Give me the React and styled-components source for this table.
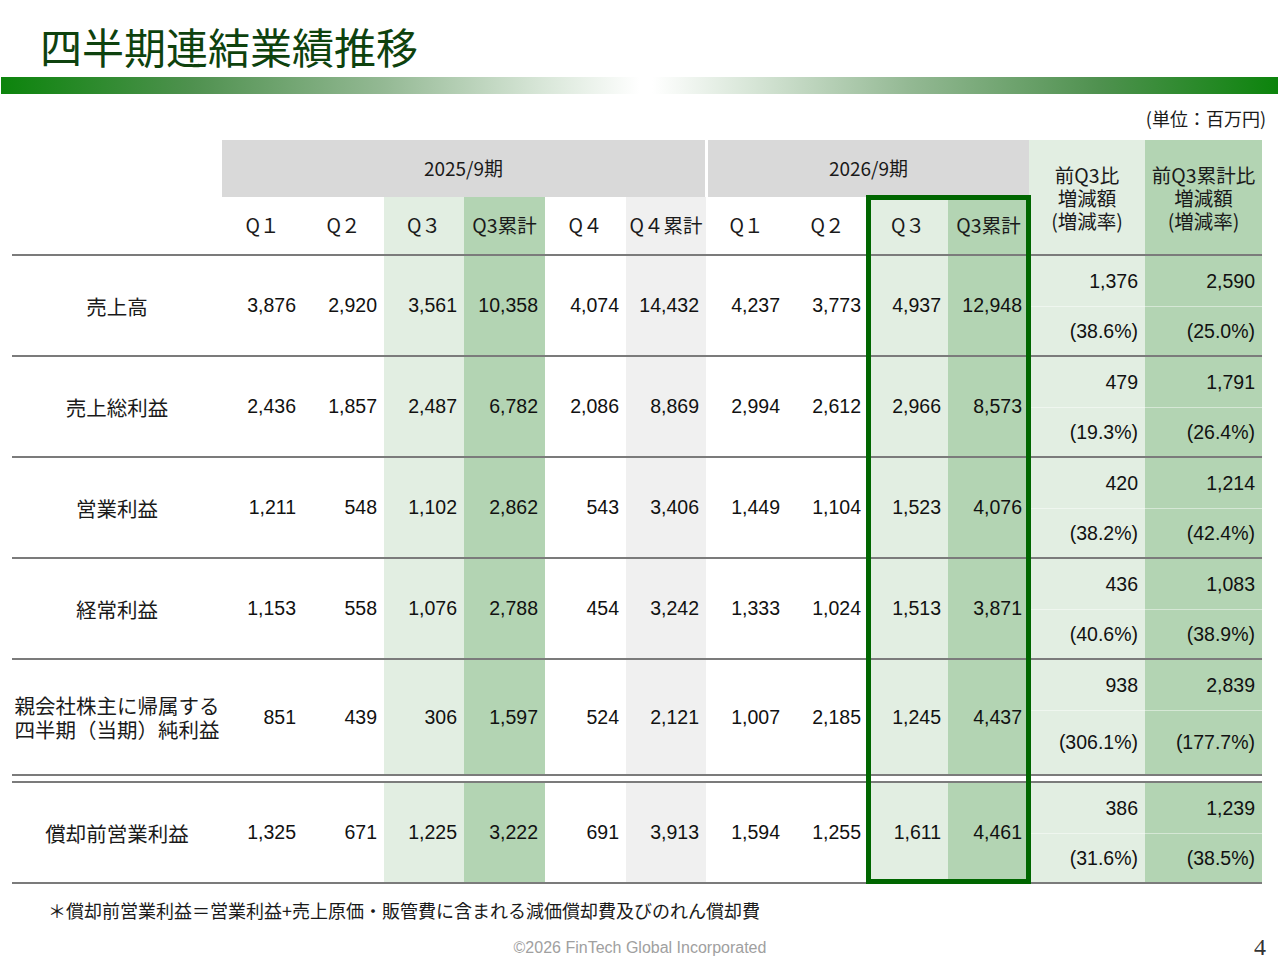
import React from "react";
import styled, { createGlobalStyle } from "styled-components";

const JP = `"Noto Sans CJK JP", "Noto Sans", sans-serif`;
const NUM = `"Liberation Sans", Arial, sans-serif`;

const COLS = "210px 81px 81px 80px 81px 81px 80px 81px 81px 80px 81px 116px 117px";
const LINE = "#7b7b7b";

const TONES = {
  plain: "transparent",
  light: "#e2eee2",
  mid: "#b3d4b3",
  gray: "#f0f0f0",
};

// 열 색상: 2025 Q1..Q4累計, 2026 Q1..Q3累計
const colTones = ["plain", "plain", "light", "mid", "plain", "gray", "plain", "plain", "light", "mid"];

const qLabels = ["Q１", "Q２", "Q３", "Q3累計", "Q４", "Q４累計", "Q１", "Q２", "Q３", "Q3累計"];

const rows = [
  {
    label: "売上高",
    values: ["3,876", "2,920", "3,561", "10,358", "4,074", "14,432", "4,237", "3,773", "4,937", "12,948"],
    diff: ["1,376", "(38.6%)"],
    diffCum: ["2,590", "(25.0%)"],
  },
  {
    label: "売上総利益",
    values: ["2,436", "1,857", "2,487", "6,782", "2,086", "8,869", "2,994", "2,612", "2,966", "8,573"],
    diff: ["479", "(19.3%)"],
    diffCum: ["1,791", "(26.4%)"],
  },
  {
    label: "営業利益",
    values: ["1,211", "548", "1,102", "2,862", "543", "3,406", "1,449", "1,104", "1,523", "4,076"],
    diff: ["420", "(38.2%)"],
    diffCum: ["1,214", "(42.4%)"],
  },
  {
    label: "経常利益",
    values: ["1,153", "558", "1,076", "2,788", "454", "3,242", "1,333", "1,024", "1,513", "3,871"],
    diff: ["436", "(40.6%)"],
    diffCum: ["1,083", "(38.9%)"],
  },
  {
    label: ["親会社株主に帰属する", "四半期（当期）純利益"],
    values: ["851", "439", "306", "1,597", "524", "2,121", "1,007", "2,185", "1,245", "4,437"],
    diff: ["938", "(306.1%)"],
    diffCum: ["2,839", "(177.7%)"],
    tall: true,
  },
  {
    label: "償却前営業利益",
    values: ["1,325", "671", "1,225", "3,222", "691", "3,913", "1,594", "1,255", "1,611", "4,461"],
    diff: ["386", "(31.6%)"],
    diffCum: ["1,239", "(38.5%)"],
    separated: true,
  },
];

function App() {
  return (
    <>
      <GlobalStyle />
      <Page>
        <Title>四半期連結業績推移</Title>
        <TitleBar />
        <Unit>(単位：百万円)</Unit>

        <TableWrap>
          <HeaderGrid>
            <PeriodCell $col="2 / 8" $gapLeft={0} $gapRight={1}>
              2025/9期
            </PeriodCell>
            <PeriodCell $col="8 / 12" $gapLeft={2} $gapRight={0}>
              2026/9期
            </PeriodCell>
            <CompareHead $col={12} $tone="light">
              <span>前Q3比</span>
              <span>増減額</span>
              <span>(増減率)</span>
            </CompareHead>
            <CompareHead $col={13} $tone="mid">
              <span>前Q3累計比</span>
              <span>増減額</span>
              <span>(増減率)</span>
            </CompareHead>
            {qLabels.map((q, i) => (
              <QCell key={i} $col={i + 2} $tone={colTones[i]}>
                {q}
              </QCell>
            ))}
          </HeaderGrid>

          {rows.map((row, r) => (
            <DataRow key={r} $tall={row.tall} $separated={row.separated}>
              <LabelCell>
                {Array.isArray(row.label)
                  ? row.label.map((l, k) => <span key={k}>{l}</span>)
                  : row.label}
              </LabelCell>
              {row.values.map((v, i) => (
                <NumCell key={i} $tone={colTones[i]}>
                  {v}
                </NumCell>
              ))}
              <SplitCell $tone="light">
                <SubTop>{row.diff[0]}</SubTop>
                <SubBottom>{row.diff[1]}</SubBottom>
              </SplitCell>
              <SplitCell $tone="mid">
                <SubTop>{row.diffCum[0]}</SubTop>
                <SubBottom>{row.diffCum[1]}</SubBottom>
              </SplitCell>
            </DataRow>
          ))}

          {/* 2026 Q3 강조 박스 */}
          <Highlight />
        </TableWrap>

        <Note>＊償却前営業利益＝営業利益+売上原価・販管費に含まれる減価償却費及びのれん償却費</Note>

        <Footer>
          <span />
          <Copyright>©2026 FinTech Global Incorporated</Copyright>
          <PageNum>4</PageNum>
        </Footer>
      </Page>
    </>
  );
}

const GlobalStyle = createGlobalStyle`
  html, body {
    margin: 0;
    padding: 0;
    background: #fff;
  }
  body {
    font-family: ${JP};
    color: #1a1a1a;
  }
`;

const Page = styled.div`
  width: 1280px;
  height: 960px;
  overflow: hidden;
  box-sizing: border-box;
  padding-top: 21px;
  display: flex;
  flex-direction: column;
`;

const Title = styled.h1`
  margin: 0;
  padding-left: 40px;
  font-family: ${JP};
  font-weight: 400;
  font-size: 42px;
  line-height: 50px;
  color: #0e420e;
`;

const TitleBar = styled.div`
  margin: 6px 2px 0 1px;
  height: 17px;
  background: linear-gradient(
    to right,
    #0c840c 0%,
    #4f914f 15%,
    #94b994 30%,
    #d6e5d6 42%,
    #ffffff 50%,
    #ffffff 51%,
    #d6e5d6 59%,
    #94b994 71%,
    #4f914f 86%,
    #0c840c 100%
  );
`;

const Unit = styled.div`
  margin-top: 14px;
  padding-right: 14px;
  text-align: right;
  font-size: 18px;
  line-height: 20px;
  color: #1a1a1a;
`;

const TableWrap = styled.div`
  position: relative;
  margin: 12px 0 0 12px;
  width: 1250px;
`;

const HeaderGrid = styled.div`
  display: grid;
  grid-template-columns: ${COLS};
  grid-template-rows: 57px 57px;
  border-bottom: 2px solid ${LINE};
`;

const PeriodCell = styled.div`
  grid-column: ${(p) => p.$col};
  grid-row: 1;
  margin-left: ${(p) => p.$gapLeft}px;
  margin-right: ${(p) => p.$gapRight}px;
  background: #d9d9d9;
  display: flex;
  align-items: center;
  justify-content: center;
  padding-bottom: 3px;
  font-size: 19px;
  color: #1a1a1a;
`;

const CompareHead = styled.div`
  grid-column: ${(p) => p.$col};
  grid-row: 1 / 3;
  background: ${(p) => TONES[p.$tone]};
  display: flex;
  flex-direction: column;
  align-items: center;
  justify-content: center;
  text-align: center;
  font-size: 19.5px;
  line-height: 23px;
  color: #1a1a1a;
  white-space: nowrap;
`;

const QCell = styled.div`
  grid-column: ${(p) => p.$col};
  grid-row: 2;
  background: ${(p) => TONES[p.$tone]};
  display: flex;
  align-items: center;
  justify-content: center;
  padding-bottom: 2px;
  font-size: 19.5px;
  color: #1a1a1a;
  white-space: nowrap;
`;

const DataRow = styled.div`
  display: grid;
  grid-template-columns: ${COLS};
  height: ${(p) => (p.$tall ? 114 : 99)}px;
  border-bottom: 2px solid ${LINE};
  ${(p) => p.$separated && `margin-top: 5px; border-top: 2px solid ${LINE};`}
`;

const LabelCell = styled.div`
  display: flex;
  flex-direction: column;
  align-items: center;
  justify-content: center;
  font-size: 20.5px;
  line-height: 24px;
  color: #1a1a1a;
  white-space: nowrap;
`;

const NumCell = styled.div`
  background: ${(p) => TONES[p.$tone]};
  display: flex;
  align-items: center;
  justify-content: flex-end;
  padding-right: 7px;
  font-family: ${NUM};
  font-size: 19.5px;
  color: #111;
`;

const SplitCell = styled.div`
  background: ${(p) => TONES[p.$tone]};
  display: flex;
  flex-direction: column;
  font-family: ${NUM};
  font-size: 19.5px;
  color: #111;
`;

const SubTop = styled.div`
  height: 50px;
  display: flex;
  align-items: center;
  justify-content: flex-end;
  padding-right: 7px;
  border-bottom: 1px solid rgba(255, 255, 255, 0.45);
`;

const SubBottom = styled.div`
  flex: 1;
  display: flex;
  align-items: center;
  justify-content: flex-end;
  padding-right: 7px;
`;

const Highlight = styled.div`
  position: absolute;
  left: 854px;
  top: 55px;
  width: 165px;
  height: 689px;
  box-sizing: border-box;
  border: 5px solid #006600;
  pointer-events: none;
`;

const Note = styled.div`
  margin-top: 16px;
  padding-left: 48px;
  font-size: 18px;
  line-height: 20px;
  color: #1a1a1a;
  white-space: nowrap;
`;

const Footer = styled.div`
  margin-top: 14px;
  display: grid;
  grid-template-columns: 1fr auto 1fr;
  align-items: center;
  height: 22px;
`;

const Copyright = styled.span`
  font-family: ${NUM};
  font-size: 16px;
  color: #a0a0a0;
`;

const PageNum = styled.span`
  justify-self: end;
  margin-right: 14px;
  font-family: "Liberation Serif", serif;
  font-size: 24px;
  color: #333;
`;

export default App;
